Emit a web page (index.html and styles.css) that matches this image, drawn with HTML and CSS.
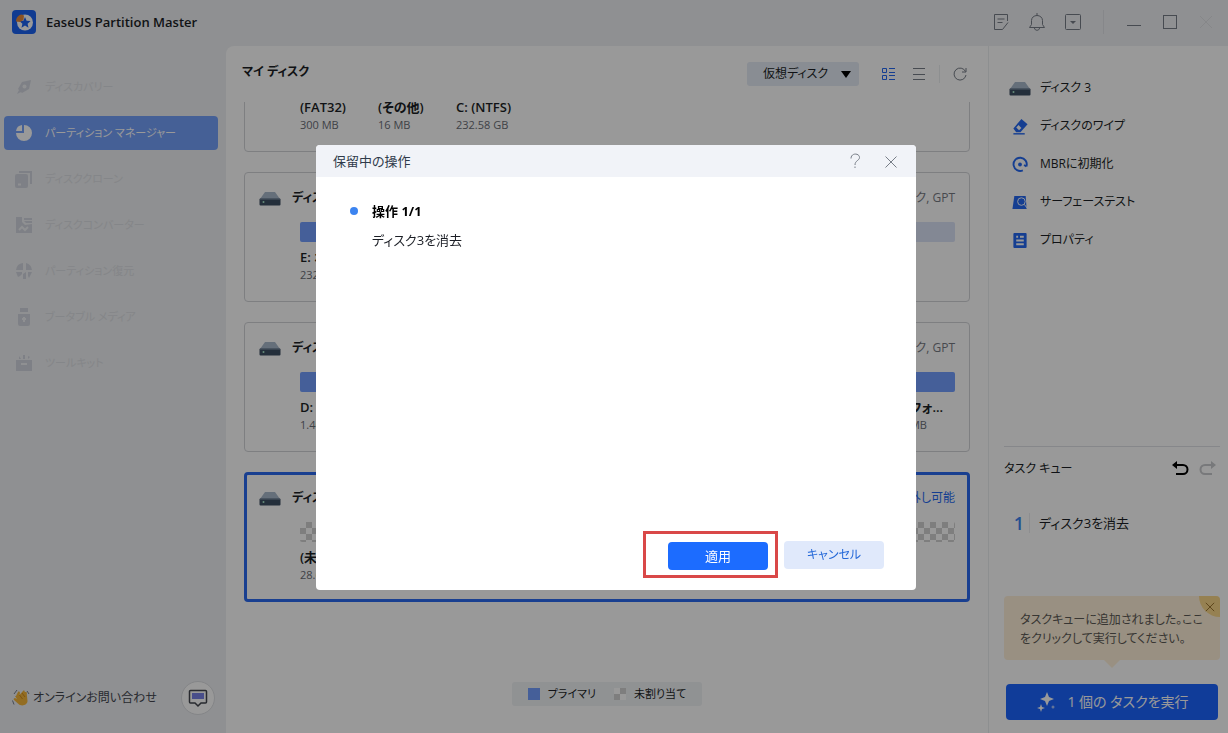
FILE: index.html
```html
<!DOCTYPE html>
<html lang="ja">
<head>
<meta charset="utf-8">
<meta name="viewport" content="width=device-width, initial-scale=1">
<title>EaseUS Partition Master</title>
<link rel="stylesheet" href="styles.css">
</head>
<body>
<svg class="defs" aria-hidden="true">
  <symbol id="disk" viewBox="0 0 22 15">
    <path d="M6 1h10l5 7H1z" fill="#a9b9cb"/>
    <rect x="0.5" y="7.5" width="21" height="7" rx="1" fill="#3d4f63"/>
    <path d="M1 8h20" stroke="#8496aa"/>
    <circle cx="4.500" cy="11" r="1" fill="#a8e8c8"/>
  </symbol>
</svg>

<div class="app">
  <header class="titlebar">
    <svg class="logo" viewBox="0 0 24 24" aria-hidden="true">
      <rect width="24" height="24" rx="4" fill="#1c63f2"/>
      <circle cx="13" cy="12.500" r="8" fill="#fff"/>
      <path d="M13 7l1.600 3.800 4 .3-3 2.700.9 4-3.500-2.200-3.500 2.200.9-4-3-2.700 4-.3z" fill="#1c63f2"/>
      <path d="M4 11.500c0-4 2.500-6.500 5.500-7l2.500 1-.5 4.500-3.500 2z" fill="#e8893a"/>
    </svg>
    <h1 class="app-name">EaseUS Partition Master</h1>
    <div class="window-tools">
      <button class="icon-btn" type="button" aria-label="ログ"><svg viewBox="0 0 20 20"><path d="M16.500 9V2.500H3.500v15h8M6.500 7h7M6.500 10.500h5M17 10.500l-5.500 7"/></svg></button>
      <button class="icon-btn" type="button" aria-label="通知"><svg viewBox="0 0 20 20"><path d="M2.500 15.500h15l-2-3V8.500c0-3-2.500-5-5.500-5s-5.500 2-5.500 5v4zM10 3.500V1M7.500 16c0 3 5 3 5 0"/></svg></button>
      <button class="icon-btn" type="button" aria-label="メニュー"><svg viewBox="0 0 20 20"><rect x="2.500" y="2.500" width="15" height="15" rx="1"/><path class="solid" d="M7 9h6l-3 3z"/></svg></button>
      <span class="tool-divider"></span>
      <button class="icon-btn" type="button" aria-label="最小化"><svg viewBox="0 0 20 20"><path d="M3 13.500h14"/></svg></button>
      <button class="icon-btn" type="button" aria-label="最大化"><svg viewBox="0 0 20 20"><rect x="3.500" y="3.500" width="13" height="13"/></svg></button>
      <button class="icon-btn faint" type="button" aria-label="閉じる"><svg viewBox="0 0 20 20"><path d="M4 4l12 12M16 4L4 16"/></svg></button>
    </div>
  </header>

  <div class="workspace">
    <aside class="sidebar">
      <nav class="nav">
        <a class="nav-item" href="#"><svg viewBox="0 0 18 18"><path d="M16 2l-2 9-7 4-4-4 4-7zM2 16l2-4 2 2z"/><circle class="hole" cx="9.500" cy="8.500" r="2"/></svg>ディスカバリー</a>
        <a class="nav-item active" href="#"><svg viewBox="0 0 18 18"><path d="M9 1a8 8 0 1 1-8 8h8zM7 1v6H1a7 7 0 0 1 6-6z"/></svg>パーティション マネージャー</a>
        <a class="nav-item" href="#"><svg viewBox="0 0 18 18"><rect x="0" y="4" width="13" height="14" rx="2"/><path d="M4 1h13v13h-2V3H4z"/><path class="cut" d="M3 14.500h3"/></svg>ディスククローン</a>
        <a class="nav-item" href="#"><svg viewBox="0 0 18 18"><path d="M1 1h6v5l3 3 7-1v9H1zM9 2h8v2H9zM9 5h8v2h-6z"/><path class="cut" d="M4 14l3-3 3 3 3-3"/></svg>ディスクコンバーター</a>
        <a class="nav-item" href="#"><svg viewBox="0 0 18 18"><path d="M8 1v7H1a8 8 0 0 1 7-7zM11 1a8 8 0 0 1 6 7h-6zM1 10h6v2l-2 2-2 1zM8 12l3-2v7H8zM13 10h4l-3 6-1-2z"/></svg>パーティション復元</a>
        <a class="nav-item" href="#"><svg viewBox="0 0 18 18"><path d="M5 0h8v4H5zM3 6h12v10a2 2 0 0 1-2 2H5a2 2 0 0 1-2-2z"/><path class="cut" d="M9 9v5M7 11h4"/></svg>ブータブル メディア</a>
        <a class="nav-item" href="#"><svg viewBox="0 0 18 18"><path d="M1 6h16v11H1zM4 2l2 3H4zM8 1h2v4H8zM13 2l2 1-2 2z"/><path class="cut" d="M6 10h6"/></svg>ツールキット</a>
      </nav>
      <div class="support">
        <svg class="wave" viewBox="0 0 20 20" aria-hidden="true">
          <path d="M5 8l2-4c1-1 2 0 2 1l-.5 2L12 3c1-1 2 0 1.700 1L15 4c1 0 1 1 .8 2l.7 7c0 4-6 6-9 3L3 12c-1-1 0-2 1-2l2 1-2-3z" fill="#f5b63a"/>
          <path d="M3 6l3-4M1.500 12.500l1.500 4M16 3l2 3" stroke="#777f8e" fill="none"/>
          <path d="M8.500 7l3 4M11 5l3 4" stroke="#d08a20" fill="none"/>
        </svg>
        <span class="support-text">オンラインお問い合わせ</span>
        <button class="chat-btn" type="button" aria-label="チャット"><svg viewBox="0 0 20 20"><path class="chat-line" d="M1.500 3.500a1 1 0 0 1 1-1h15a1 1 0 0 1 1 1V14a1 1 0 0 1-1 1H13l-3 3-3-3H2.500a1 1 0 0 1-1-1z"/><rect x="4" y="5" width="12" height="6" fill="#7a83e6"/></svg></button>
      </div>
    </aside>

    <main class="main">
      <div class="main-head">
        <h2 class="main-title">マイ ディスク</h2>
        <div class="main-tools">
          <button class="select-btn" type="button">仮想ディスク<span class="caret"></span></button>
          <button class="icon-btn blue" type="button" aria-label="カード表示"><svg viewBox="0 0 20 20"><path d="M3.500 4.500h4v4h-4zM3.500 11.500h4v4h-4zM10 4.500h6M10 8.500h6M10 11.500h6M10 15.500h6"/></svg></button>
          <button class="icon-btn" type="button" aria-label="リスト表示"><svg viewBox="0 0 20 20"><path d="M4 4.500h12M4 10.500h12M4 15.500h12"/></svg></button>
          <span class="tool-divider"></span>
          <button class="icon-btn" type="button" aria-label="更新"><svg viewBox="0 0 20 20"><path d="M15.500 7.500a6 6 0 1 0 .5 3.500M16 4v4h-4"/></svg></button>
        </div>
      </div>

      <div class="disk-view">
        <div class="disk-list">
          <section class="disk">
            <div class="disk-head"><svg class="disk-icon"><use href="#disk"/></svg><h3>ディスク 0</h3><span class="disk-type">ベーシック, GPT</span></div>
            <div class="parts">
              <div class="part small"><span class="bar"></span><b>(FAT32)</b><small>300 MB</small></div>
              <div class="part small"><span class="bar pale"></span><b>(その他)</b><small>16 MB</small></div>
              <div class="part"><span class="bar"></span><b>C: (NTFS)</b><small>232.58 GB</small></div>
            </div>
          </section>
          <section class="disk">
            <div class="disk-head"><svg class="disk-icon"><use href="#disk"/></svg><h3>ディスク 1</h3><span class="disk-type">ベーシック, GPT</span></div>
            <div class="parts">
              <div class="part"><span class="bar"></span><b>E: ボリューム (NTFS)</b><small>232.87 GB</small></div>
              <div class="part medium"><span class="bar pale"></span><b>(その他)</b><small>16 MB</small></div>
            </div>
          </section>
          <section class="disk">
            <div class="disk-head"><svg class="disk-icon"><use href="#disk"/></svg><h3>ディスク 2</h3><span class="disk-type">ベーシック, GPT</span></div>
            <div class="parts">
              <div class="part"><span class="bar"></span><b>D: (NTFS)</b><small>1.46 TB</small></div>
              <div class="part small"><span class="bar"></span><b>*: (未フォ...</b><small>16.00 MB</small></div>
            </div>
          </section>
          <section class="disk selected">
            <div class="disk-head"><svg class="disk-icon"><use href="#disk"/></svg><h3>ディスク 3</h3><span class="disk-type">ベーシック, MBR, 取り外し可能</span></div>
            <div class="parts">
              <div class="part"><span class="bar checker"></span><b>(未割り当て)</b><small>28.64 GB</small></div>
            </div>
          </section>
        </div>
      </div>

      <div class="legend">
        <span class="key"><i class="swatch"></i>プライマリ</span>
        <span class="key"><i class="swatch checker"></i>未割り当て</span>
      </div>
    </main>

    <aside class="panel">
      <div class="actions">
        <h2 class="action"><svg class="disk-icon"><use href="#disk"/></svg>ディスク 3</h2>
        <a class="action" href="#"><svg viewBox="0 0 18 18"><path d="M10.500 1L17 6.500 9.500 15H5L2 11z"/><path d="M2 16h12v1.500H2z"/><path class="hole" d="M7.500 7.500l3 3L8 13l-3-3z"/></svg>ディスクのワイプ</a>
        <a class="action" href="#"><svg viewBox="0 0 18 18"><path class="stroke" d="M12 15.200A7 7 0 1 1 15.800 11M15.800 11l-2.500-1.500"/><circle cx="9" cy="9" r="2"/></svg>MBRに初期化</a>
        <a class="action" href="#"><svg viewBox="0 0 18 18"><path d="M3 2h12l1 14H1z"/><circle class="lens" cx="10.500" cy="8" r="4"/><path class="lens" d="M13.500 11l4 5"/></svg>サーフェーステスト</a>
        <a class="action" href="#"><svg viewBox="0 0 18 18"><rect x="2" y="1" width="14" height="16" rx="1"/><path class="cut" d="M5 5h2M9 5h4M5 9h8M5 13h8"/></svg>プロパティ</a>
      </div>

      <section class="queue">
        <div class="queue-head">
          <h2 class="queue-title">タスク キュー</h2>
          <button class="history" type="button" aria-label="元に戻す"><svg viewBox="0 0 18 18"><path d="M5 5h7a4.500 4.500 0 0 1 0 9H5"/><path class="solid" d="M1 5l5-4v8z"/></svg></button>
          <button class="history off" type="button" aria-label="やり直し" disabled><svg viewBox="0 0 18 18"><path d="M13 5H6a4.500 4.500 0 0 0 0 9h7"/><path class="solid" d="M17 5l-5-4v8z"/></svg></button>
        </div>
        <ol class="tasks"><li><span class="task-no">1</span><span class="task-name">ディスク3を消去</span></li></ol>
        <div class="tip">
          <p>タスクキューに追加されました。ここをクリックして実行してください。</p>
          <button class="tip-close" type="button" aria-label="閉じる"><svg viewBox="0 0 12 12"><path d="M1 1l10 10M11 1L1 11"/></svg></button>
        </div>
        <button class="run-btn" type="button"><svg viewBox="0 0 22 22"><path d="M12 1l2 5 5 2-5 2-2 5-2-5-5-2 5-2zM6 13l1 3 3 1-3 1-1 3-1-3-3-1 3-1z"/><circle cx="18" cy="16" r="1.500" opacity=".6"/></svg>1 個の タスクを実行</button>
      </section>
    </aside>
  </div>
</div>

<div class="overlay">
  <div class="dialog" role="dialog" aria-modal="true" aria-labelledby="dialog-title">
    <div class="dialog-head">
      <h2 class="dialog-title" id="dialog-title">保留中の操作</h2>
      <button class="icon-btn" type="button" aria-label="ヘルプ"><svg viewBox="0 0 20 20"><path d="M6 7.500c0-6 8.500-5.500 8.500-1 0 3-4.500 3-4.500 7.500M10 15.500V17"/></svg></button>
      <button class="icon-btn" type="button" aria-label="閉じる"><svg viewBox="0 0 20 20"><path d="M4.500 5.500l11 11M15.500 5.500l-11 11"/></svg></button>
    </div>
    <div class="dialog-body">
      <span class="dot"></span>
      <h3 class="op-title">操作 1/1</h3>
      <p class="op-text">ディスク3を消去</p>
    </div>
    <div class="dialog-foot">
      <span class="highlight"><button class="btn primary" type="button">適用</button></span>
      <button class="btn" type="button">キャンセル</button>
    </div>
  </div>
</div>
</body>
</html>
```

FILE: styles.css
```css
* { box-sizing: border-box; }

body {
  margin: 0;
  color: #1c1f26;
  background: #eef0f3;
  font: 13px/20px "Open Sans", "Noto Sans CJK JP", sans-serif;
  font-feature-settings: "palt";
}

h1, h2, h3, p, ol { margin: 0; padding: 0; font-size: inherit; font-weight: inherit; }
a { color: inherit; text-decoration: none; }
button { margin: 0; padding: 0; border: 0; background: none; color: inherit; font: inherit; font-feature-settings: inherit; cursor: pointer; }
svg { display: block; flex: none; }
.defs { display: none; }

.app { display: flex; flex-direction: column; height: 100vh; overflow: hidden; }

/* Title bar */
.titlebar { display: flex; align-items: center; flex: none; height: 46px; padding: 0 12px; }
.logo { width: 24px; height: 24px; margin-bottom: 2px; }
.app-name { flex: 1; padding: 0 0 2px 10px; font-weight: 600; }
.window-tools { display: flex; align-items: center; gap: 16px; padding-bottom: 2px; }
.icon-btn { width: 20px; height: 20px; }
.icon-btn svg { width: 20px; height: 20px; fill: none; stroke: #777d87; }
.icon-btn .solid { fill: #777d87; stroke: none; }
.icon-btn.faint svg { stroke: #dfe1e5; }
.icon-btn.blue svg { stroke: #2468f2; }
.tool-divider { width: 1px; height: 24px; background: #dfe2e7; }
.window-tools .tool-divider { margin: 0 4px; }

.workspace { display: flex; flex: 1; min-height: 0; }

/* Sidebar */
.sidebar { display: flex; flex-direction: column; justify-content: space-between; flex: none; width: 226px; padding: 24px 10px 18px 4px; }
.nav { display: flex; flex-direction: column; gap: 12px; margin-right: -2px; }
.nav-item { display: flex; align-items: center; gap: 12px; height: 34px; padding: 0 11px; border-radius: 4px; color: #dddfe4; font-size: 11px; }
.nav-item svg { width: 18px; height: 18px; fill: #d3d6df; }
.nav-item .hole { fill: #eef0f3; }
.cut { fill: none; stroke: #eef0f3; stroke-width: 2; }
.nav-item.active { background: #74a0fb; color: #fff; }
.nav-item.active svg { fill: #fff; }
.support { display: flex; align-items: center; padding: 0 1px 0 7px; }
.wave { width: 20px; height: 20px; }
.support-text { flex: 1; padding-left: 2px; color: #43474f; font-size: 12px; }
.chat-btn { display: grid; place-items: center; width: 34px; height: 34px; border: 1px solid #dcdee2; border-radius: 50%; background: #fff; }
.chat-btn svg { width: 20px; height: 20px; }
.chat-line { fill: none; stroke: #43474f; stroke-width: 1.500; }

/* Disks */
.main { display: flex; flex-direction: column; flex: 1; min-width: 0; padding: 16px 18px 27px; border-right: 1px solid #eceef1; border-radius: 8px 0 0 0; background: #fff; }
.main-head { display: flex; align-items: center; justify-content: space-between; height: 24px; }
.main-title { margin-left: -2px; padding-bottom: 4px; font-size: 12px; font-weight: 600; }
.main-tools { display: flex; align-items: center; gap: 10px; }
.main-tools .tool-divider { height: 18px; background: #eceef1; }
.main-tools .select-btn { margin-right: 10px; }
.select-btn { display: flex; align-items: center; justify-content: space-between; width: 112px; height: 24px; padding: 0 8px 0 16px; border-radius: 3px; background: #e4ebf5; font-size: 12px; }
.caret { border: 5px solid transparent; border-top: 7px solid #000; border-bottom: 0; }
.disk-view { flex: 1; min-height: 0; margin-top: 16px; overflow: hidden; }
.disk-list { display: flex; flex-direction: column; gap: 20px; margin-top: -80px; }
.disk { min-height: 130px; padding: 15px 14px; border: 1px solid #d2d4d8; border-radius: 4px; }
.disk.selected { padding: 13px 12px; border: 3px solid #2b6af0; }
.disk-head { display: flex; align-items: center; gap: 11px; height: 20px; }
.disk-head h3 { flex: 1; font-size: 12px; font-weight: 600; }
.disk-icon { width: 22px; height: 15px; }
.disk-type { color: #777b83; font-size: 12px; }
.selected .disk-type { color: #2468f2; }
.parts { display: flex; gap: 2px; margin-top: 14px; padding-left: 41px; }
.part { display: flex; flex-direction: column; flex: 1; min-width: 0; line-height: 18px; }
.part.small { flex: none; width: 76px; }
.part.medium { flex: none; width: 160px; }
.part b { white-space: nowrap; font-size: 13px; font-weight: 600; }
.part small { color: #6a6e76; font-size: 11px; }
.bar { height: 20px; margin-bottom: 6px; border-radius: 2px; background: #739fff; }
.bar.pale { background: #dbe3f7; }
.bar.checker, .swatch.checker { background: repeating-conic-gradient(#d3d3d3 0 25%, #fff 0 50%) 0 0 / 12px 12px; }
.legend { display: flex; gap: 18px; align-self: center; height: 24px; padding: 0 16px; border-radius: 3px; background: #f1f3f6; font-size: 11px; }
.key { display: flex; align-items: center; gap: 8px; }
.swatch { width: 12px; height: 12px; background: #739fff; }

/* Right panel */
.panel { display: flex; flex-direction: column; flex: none; width: 239px; padding: 23px 8px 13px 15px; background: #fff; }
.actions { flex: 1; }
.action { display: flex; align-items: center; gap: 9px; height: 38px; padding-left: 5px; font-size: 12px; }
.action svg { width: 22px; height: 17px; fill: #2468f2; }
.action .hole { fill: #fff; }
.action .cut { stroke: #fff; }
.action .stroke { fill: none; stroke: #2468f2; stroke-width: 2; }
.action .lens { fill: #2468f2; stroke: #fff; }
.queue { display: flex; flex-direction: column; border-top: 1px solid #e0e2e6; }
.queue-head { display: flex; align-items: center; gap: 10px; padding: 12px 3px 0 0; }
.queue-title { flex: 1; font-size: 12px; }
.history svg { width: 18px; height: 18px; fill: none; stroke: #000; stroke-width: 2; }
.history .solid { fill: #000; stroke: none; }
.history.off svg { stroke: #c8cacd; }
.history.off .solid { fill: #c8cacd; }
.tasks { list-style: none; height: 117px; padding-top: 34px; }
.tasks li { display: flex; align-items: center; }
.task-no { width: 26px; padding: 0 5px; margin-right: 9px; border-right: 1px solid #ebedf0; color: #3c84f0; font-size: 18px; font-weight: 600; text-align: right; }
.tip { position: relative; margin-bottom: 24px; padding: 14px 16px 12px; border-radius: 4px; background: #fff1d9; color: #5d5a55; font-size: 12px; line-height: 19px; }
.tip::after { content: ""; position: absolute; top: 100%; left: 50%; border: 8px solid transparent; border-top-color: #fff1d9; border-bottom: 0; transform: translateX(-50%); }
.tip-close { position: absolute; top: 0; right: 0; display: grid; place-items: center; width: 21px; height: 21px; border-radius: 0 4px 0 21px; background: #fbd789; }
.tip-close svg { width: 10px; height: 10px; fill: none; stroke: #8a6420; }
.run-btn { display: flex; align-items: center; justify-content: center; gap: 10px; height: 36px; margin: 0 2px; border-radius: 4px; background: #1b64ff; color: #fff; font-size: 14px; }
.run-btn svg { width: 22px; height: 22px; fill: #fff; }

/* Dialog */
.overlay { position: fixed; inset: 0; display: grid; place-items: center; padding: 2px 0 0 4px; background: rgba(0, 0, 0, .4); }
.dialog { display: flex; flex-direction: column; width: 600px; max-width: 100%; min-height: 445px; border-radius: 4px; background: #fff; overflow: hidden; }
.dialog-head { display: flex; align-items: center; gap: 16px; height: 32px; padding: 0 15px 0 17px; background: #f1f3f8; }
.dialog-title { flex: 1; color: #2f3a4a; }
.dialog-body { display: grid; grid-template-columns: 8px 1fr; align-items: center; align-content: start; flex: 1; gap: 9px 14px; padding: 24px 34px; }
.dot { width: 8px; height: 8px; border-radius: 50%; background: #3c84f0; }
.op-title { color: #000; font-weight: 700; }
.op-text { grid-column: 2; }
.dialog-foot { display: flex; align-items: center; justify-content: flex-end; gap: 6px; padding: 0 32px 12px 0; }
.highlight { padding: 8px 7px 5px 22px; border: 3px solid #d94848; }
.btn { width: 100px; height: 28px; border-radius: 4px; background: #e0e9fb; color: #2468d8; font-size: 12px; }
.btn.primary { display: block; background: #1c6cff; color: #fff; font-size: 13px; }
```
